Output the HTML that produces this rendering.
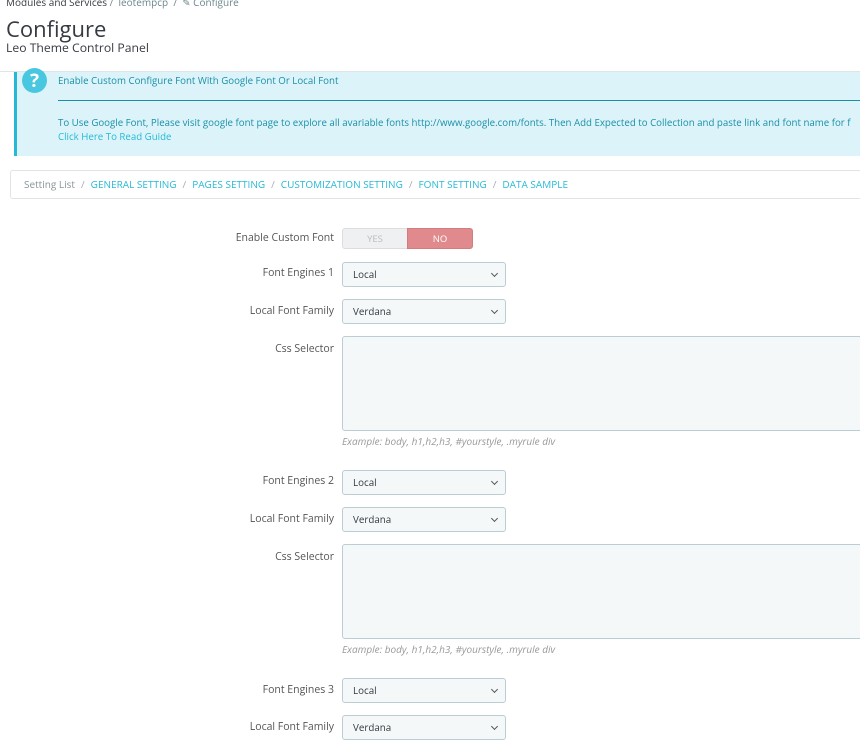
<!DOCTYPE html><html><head><meta charset="utf-8"><style>
*{box-sizing:border-box;margin:0;padding:0}
body{width:860px;height:750px;overflow:hidden;background:#fff;font-family:"Open Sans","Liberation Sans",sans-serif;color:#363a41;position:relative}
.a{position:absolute}
.hdr{left:0;top:0;width:860px;height:72px;border-bottom:1px solid #dfe4e6;background:#fff}
.bc{left:6px;top:-5px;font-size:10px;color:#363a41}
.bc span{color:#6c868e}
h1{position:absolute;left:6px;top:14px;font-size:22px;font-weight:normal;color:#363a41}
.sub{left:6px;top:39px;font-size:12.2px;color:#363a41}
.alert{left:14px;top:72px;width:846px;height:84px;background:#dcf4f9;border-left:3px solid #25b9d7}
.ic{left:22px;top:68px;width:25px;height:25px;border-radius:50%;background:#4ac7e0;color:#fff;font-weight:bold;font-size:19px;text-align:center;line-height:25px}
.at{font-size:9.7px;color:#1b8fa8}
.crumb{left:10px;top:170px;width:852px;height:29px;border:1px solid #dfe4e6;border-radius:3px;font-size:10px;padding-left:13px;line-height:27px;color:#8a9599;white-space:nowrap}
.crumb a{color:#25b9d7;text-decoration:none}
.crumb i{font-style:normal;color:#aab;margin:0 6px}
.lbl{font-size:10.5px;color:#555;text-align:right;width:334px;left:0}
.sel{left:342px;width:164px;height:25px;border:1px solid #bbcdd2;border-radius:3px;background:#f5f8f9;font-size:9.8px;padding-left:10px;line-height:23px;color:#363a41}
.sel:after{content:"";position:absolute;right:8px;top:8px;width:4px;height:4px;border-right:1px solid #555;border-bottom:1px solid #555;transform:rotate(45deg)}
.ta{left:342px;width:530px;height:95px;border:1px solid #bbcdd2;border-radius:3px;background:#f5f8f9}
.hint{left:342px;font-size:10px;font-style:italic;color:#999}
</style></head><body>
<div class="a hdr"></div>
<div class="a bc">Modules and Services <span>/ &nbsp;leotempcp &nbsp;/ &nbsp;✎ Configure</span></div>
<h1>Configure</h1>
<div class="a sub">Leo Theme Control Panel</div>
<div class="a alert"></div>
<div class="a ic">?</div>
<div class="a at" style="left:58px;top:74px">Enable Custom Configure Font With Google Font Or Local Font</div>
<div class="a" style="left:58px;top:100px;width:802px;border-top:1px solid #1b8fa8"></div>
<div class="a at" style="left:58px;top:116px;white-space:nowrap">To Use Google Font, Please visit google font page to explore all avariable fonts http://www.google.com/fonts. Then Add Expected to Collection and paste link and font name for f</div>
<div class="a at" style="left:58px;top:130px;color:#25b9d7">Click Here To Read Guide</div>
<div class="a crumb">Setting List<i>/</i><a>GENERAL SETTING</a><i>/</i><a>PAGES SETTING</a><i>/</i><a>CUSTOMIZATION SETTING</a><i>/</i><a>FONT SETTING</a><i>/</i><a>DATA SAMPLE</a></div>

<div class="a lbl" style="top:231px">Enable Custom Font</div>
<div class="a" style="left:342px;top:228px;width:66px;height:21px;background:#eef0f1;border:1px solid #ddd;border-radius:3px 0 0 3px;font-size:9.5px;color:#bbb;text-align:center;line-height:19px">YES</div>
<div class="a" style="left:407px;top:228px;width:66px;height:21px;background:#e08a8e;border:1px solid #d27c80;border-radius:0 3px 3px 0;font-size:9.5px;color:#fff;text-align:center;line-height:19px">NO</div>

<div class="a lbl" style="top:266px">Font Engines 1</div><div class="a sel" style="top:262px">Local</div>
<div class="a lbl" style="top:304px">Local Font Family</div><div class="a sel" style="top:299px">Verdana</div>
<div class="a lbl" style="top:342px">Css Selector</div><div class="a ta" style="top:336px"></div>
<div class="a hint" style="top:434px">Example: body, h1,h2,h3, #yourstyle, .myrule div</div>

<div class="a lbl" style="top:474px">Font Engines 2</div><div class="a sel" style="top:470px">Local</div>
<div class="a lbl" style="top:512px">Local Font Family</div><div class="a sel" style="top:507px">Verdana</div>
<div class="a lbl" style="top:550px">Css Selector</div><div class="a ta" style="top:544px"></div>
<div class="a hint" style="top:642px">Example: body, h1,h2,h3, #yourstyle, .myrule div</div>

<div class="a lbl" style="top:683px">Font Engines 3</div><div class="a sel" style="top:678px">Local</div>
<div class="a lbl" style="top:720px">Local Font Family</div><div class="a sel" style="top:715px">Verdana</div>
</body></html>
